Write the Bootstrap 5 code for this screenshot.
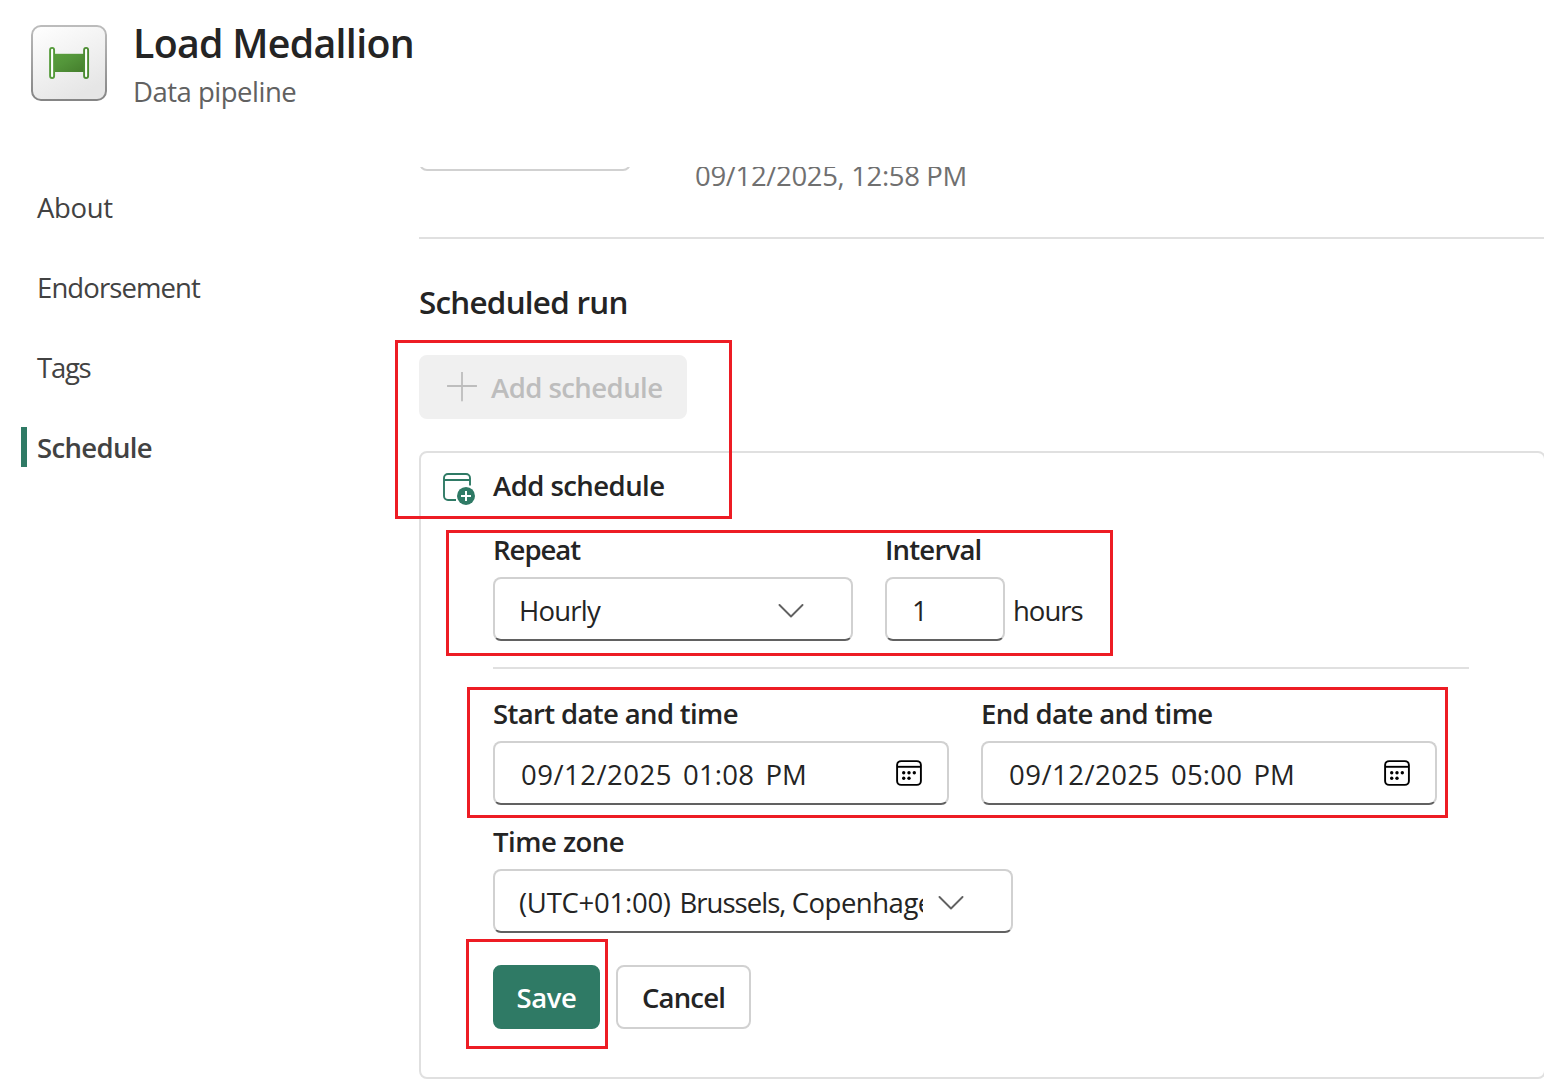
<!DOCTYPE html>
<html lang="en">
<head>
<meta charset="utf-8">
<meta name="viewport" content="width=device-width, initial-scale=1">
<title>Load Medallion - Schedule</title>
<link href="https://cdn.jsdelivr.net/npm/bootstrap@5.3.0/dist/css/bootstrap.min.css" rel="stylesheet">
<style>
  body { font-family: "Open Sans", "Noto Sans", sans-serif; font-size: 27.5px; line-height: 40px; color: #242424; height: 1080px; overflow: hidden; }
  .semi { font-weight: 600; }
  .page-head { height: 167px; padding: 17px 0 0 31px; gap: 25px; }
  .item-icon { margin-top: 8px; width: 76px; height: 76px; }
  .item-title { font-size: 39.3px; line-height: 52px; margin: 0 0 3px 1px; letter-spacing: -.7px; }
  .item-kind { color: #616161; letter-spacing: -.5px; padding-left: 1px; }
  .side { width: 419px; padding: 20px 0 0 21px; }
  .side .nav { gap: 40px; }
  .side .nav-link { height: 40px; padding: 1px 0 0 10px; color: #424242; border-left: 6px solid transparent; }
  .side .nav-link.active { border-color: #2f7a65; font-weight: 600; }
  .pane { width: 1125px; height: 913px; }
  .last-run { height: 72px; border-bottom: 2px solid #e0e0e0; }
  .run-box { width: 212px; height: 32px; margin-top: -28px; border: 2px solid #d1d1d1; border-radius: 8px; }
  .run-date { color: #707070; margin: -11px 0 0 64px; letter-spacing: -.34px; }
  .sect-title { font-size: 31.4px; line-height: 44px; margin: 41px 0 0; letter-spacing: -.75px; }
  .btn { font-size: 27.5px; line-height: 40px; font-weight: 600; height: 64px; border-radius: 8px; border-width: 2px; padding: 11px 0; }
  .btn-add, .btn-add:disabled { width: 268px; margin-top: 31px; background: #f0f0f0; color: #bdbdbd; border-color: #f0f0f0; opacity: 1; gap: 14px; padding-left: 26px; letter-spacing: -.54px; }
  .btn-save { width: 107px; background: #2f7a65; border-color: #2f7a65; color: #fff; letter-spacing: -.44px; }
  .btn-cancel { width: 135px; background: #fff; border-color: #d1d1d1; color: #242424; letter-spacing: -.8px; }
  .sched { width: 1127px; height: 628px; margin-top: 32px; border: 2px solid #e0e0e0; border-radius: 8px; padding: 12px 0 0 22px; }
  .sched-head { height: 40px; gap: 18px; margin-bottom: 24px; letter-spacing: -.54px; }
  .sched-head span, .btn-add span { padding-top: 2px; }
  .sched-body { padding-left: 50px; }
  .lbl { font-weight: 600; line-height: 40px; padding-top: 1px; margin: 0 0 7px; display: block; }
  .field { height: 64px; border: 2px solid #d1d1d1; border-bottom-color: #616161; border-radius: 8px; background: #fff; padding: 4px 24px 0; }
  .w-repeat { width: 360px; padding-right: 47px; }
  .w-interval { width: 120px; padding-left: 25px; }
  .w-date { width: 456px; padding-left: 26px; }
  .w-zone { width: 520px; padding-right: 47px; }
  .unit { padding: 14px 0 0 8px; }
  .rule { width: 976px; height: 2px; background: #e0e0e0; margin: 26px 0 24px; }
  .clip { width: 404px; overflow: hidden; white-space: nowrap; letter-spacing: -.5px; }
  .z-utc { letter-spacing: -.26px; margin-right: 2px; }
  .z-city { letter-spacing: -.95px; }
  .d-day { width: 162px; letter-spacing: .5px; }
  .d-hour { width: 82.5px; letter-spacing: .2px; }
  .d-ampm { letter-spacing: 0; }
  .t1 { letter-spacing: -.36px; } .t2 { letter-spacing: -.51px; } .t3 { letter-spacing: -.64px; }
  .t4 { letter-spacing: -.79px; } .t5 { letter-spacing: -.9px; } .t6 { letter-spacing: -1px; } .t7 { letter-spacing: -1.25px; }
  .callout { position: absolute; border: 3px solid #ed1c24; pointer-events: none; }
  .c-add { left: 395px; top: 340px; width: 337px; height: 179px; }
  .c-repeat { left: 446px; top: 530px; width: 667px; height: 126px; }
  .c-dates { left: 467px; top: 687px; width: 981px; height: 131px; }
  .c-save { left: 466px; top: 939px; width: 142px; height: 110px; }
  svg { display: block; flex: none; }
</style>
</head>
<body class="bg-white position-relative">
<header class="page-head d-flex align-items-start">
  <svg class="item-icon" viewBox="0 0 76 76">
    <defs>
      <linearGradient id="tile" x1="0" y1="0" x2=".5" y2="1"><stop offset="0" stop-color="#fff"/><stop offset="1" stop-color="#e6e6e6"/></linearGradient>
      <linearGradient id="edge" x1="0" y1="0" x2="0" y2="1"><stop offset="0" stop-color="#bcbcbc"/><stop offset="1" stop-color="#858585"/></linearGradient>
      <linearGradient id="pipe" x1="0" y1="0" x2="1" y2="1"><stop offset="0" stop-color="#5a9f3d"/><stop offset=".4" stop-color="#53953a"/><stop offset="1" stop-color="#447d2c"/></linearGradient>
    </defs>
    <rect x="1" y="1" width="74" height="74" rx="9" fill="url(#tile)" stroke="url(#edge)" stroke-width="2"/>
    <rect x="23" y="28.8" width="31" height="18.2" fill="url(#pipe)"/>
    <rect x="19.1" y="22.9" width="4" height="30.2" rx="2" fill="#fff" stroke="#539a39" stroke-width="1.9"/>
    <rect x="53.1" y="22.9" width="4" height="30.2" rx="2" fill="#fff" stroke="#4b8c32" stroke-width="1.9"/>
  </svg>
  <div>
    <h1 class="item-title semi">Load Medallion</h1>
    <div class="item-kind">Data pipeline</div>
  </div>
</header>

<div class="d-flex">
  <aside class="side flex-shrink-0">
    <nav class="nav flex-column">
      <a class="nav-link t1">About</a>
      <a class="nav-link t5">Endorsement</a>
      <a class="nav-link t7">Tags</a>
      <a class="nav-link active t3">Schedule</a>
    </nav>
  </aside>

  <main class="pane overflow-hidden">
    <section class="last-run d-flex align-items-start overflow-hidden">
      <div class="run-box"></div>
      <div class="run-date">09/12/2025, 12:58 PM</div>
    </section>

    <h2 class="sect-title semi">Scheduled run</h2>
    <button class="btn btn-add d-flex align-items-center" disabled>
      <svg width="30" height="30" viewBox="0 0 30 30"><path d="M15 .5v29M.5 15h29" stroke="#bdbdbd" stroke-width="1.8" stroke-linecap="round" transform="translate(0 -1)"/></svg>
      <span>Add schedule</span>
    </button>

    <section class="sched">
      <div class="sched-head d-flex align-items-center semi">
        <svg width="32" height="32" viewBox="0 0 32 32" transform="translate(0 4)">
          <path d="M13 27H5a4 4 0 0 1-4-4V5a4 4 0 0 1 4-4h18a4 4 0 0 1 4 4v7.5M1 7h26" fill="none" stroke="#2f7a65" stroke-width="1.9"/>
          <circle cx="23" cy="22.9" r="9" fill="#2f7a65"/>
          <path d="M23 17.9v10M18 22.9h10" stroke="#fff" stroke-width="2"/>
        </svg>
        <span>Add schedule</span>
      </div>

      <div class="sched-body">
        <div class="d-flex">
          <div class="me-4 pe-2">
            <label class="lbl t6">Repeat</label>
            <div class="field w-repeat d-flex align-items-center justify-content-between">
              <span class="t4">Hourly</span>
              <svg width="26" height="15" viewBox="0 0 26 15"><path d="M1.5 1 13 12.5 24.5 1" fill="none" stroke="#616161" stroke-width="1.9" stroke-linecap="round" stroke-linejoin="round"/></svg>
            </div>
          </div>
          <div>
            <label class="lbl t4">Interval</label>
            <div class="d-flex">
              <div class="field w-interval d-flex align-items-center">1</div>
              <span class="unit t6">hours</span>
            </div>
          </div>
        </div>

        <div class="rule"></div>

        <div class="d-flex">
          <div class="me-4 pe-2">
            <label class="lbl t3">Start date and time</label>
            <div class="field w-date d-flex align-items-center">
              <span class="d-day">09/12/2025</span><span class="d-hour">01:08</span><span class="d-ampm">PM</span>
              <svg class="ms-auto" width="28" height="28" viewBox="0 0 28 28" transform="translate(0 -2)"><use href="#cal"/></svg>
            </div>
          </div>
          <div>
            <label class="lbl t3">End date and time</label>
            <div class="field w-date d-flex align-items-center">
              <span class="d-day">09/12/2025</span><span class="d-hour">05:00</span><span class="d-ampm">PM</span>
              <svg class="ms-auto" width="28" height="28" viewBox="0 0 28 28" transform="translate(0 -2)">
                <g id="cal">
                  <rect x="2.1" y="2.1" width="23.8" height="23.8" rx="4" fill="none" stroke="#000" stroke-width="1.9"/>
                  <path d="M2 7.8h24" stroke="#000" stroke-width="1.9"/>
                  <g fill="#000"><circle cx="8.7" cy="13.8" r="1.7"/><circle cx="14" cy="13.8" r="1.7"/><circle cx="19.3" cy="13.8" r="1.7"/><circle cx="8.7" cy="19.2" r="1.7"/><circle cx="14" cy="19.2" r="1.7"/></g>
                </g>
              </svg>
            </div>
          </div>
        </div>

        <label class="lbl t2 mt-3">Time zone</label>
        <div class="field w-zone d-flex align-items-center justify-content-between">
          <div class="clip"><span class="z-utc">(UTC+01:00)</span> <span class="z-city">Brussels, </span>Copenhagen, Madrid, Paris</div>
          <svg width="26" height="15" viewBox="0 0 26 15"><path d="M1.5 1 13 12.5 24.5 1" fill="none" stroke="#616161" stroke-width="1.9" stroke-linecap="round" stroke-linejoin="round"/></svg>
        </div>

        <div class="d-flex gap-3 mt-3 pt-3">
          <button class="btn btn-save">Save</button>
          <button class="btn btn-cancel">Cancel</button>
        </div>
      </div>
    </section>
  </main>
</div>

<div class="callout c-add"></div>
<div class="callout c-repeat"></div>
<div class="callout c-dates"></div>
<div class="callout c-save"></div>
<script src="https://cdn.jsdelivr.net/npm/bootstrap@5.3.0/dist/js/bootstrap.bundle.min.js"></script>
</body>
</html>
